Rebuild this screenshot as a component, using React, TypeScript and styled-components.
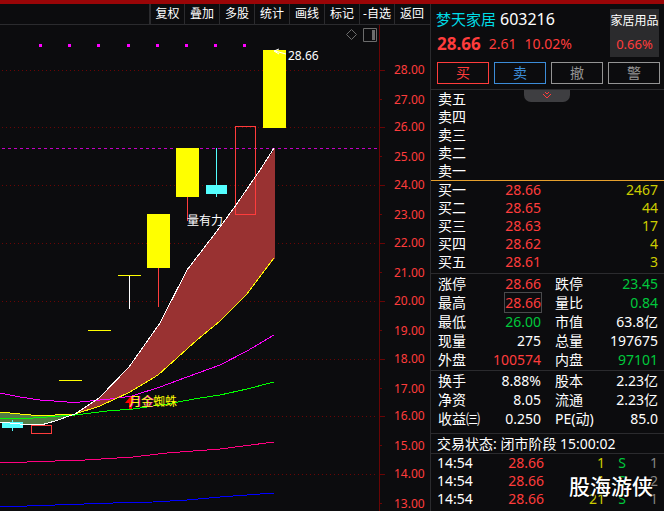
import React from 'react';
import styled, { createGlobalStyle } from 'styled-components';

const c = {
  bg: '#0c0c0e',
  line: '#2b2b2e',
  red: '#ff3c3c',
  green: '#00c83c',
  yellow: '#cccc00',
  white: '#ffffff',
  grey: '#858585',
  blue: '#3c8cd8',
};

const GlobalStyle = createGlobalStyle`
  * { box-sizing: border-box; }
  body {
    margin: 0;
    background: ${c.bg};
    color: ${c.white};
    font-family: "Noto Sans", "Noto Sans CJK SC", sans-serif;
    font-size: 14px;
  }
  button { font: inherit; padding: 0; cursor: pointer; }
`;

const Page = styled.div`
  min-height: 100vh;
  display: flex;
  flex-direction: column;
  border-top: 4px solid #990507;
`;

const Columns = styled.main`
  flex: 1;
  display: grid;
  grid-template-columns: minmax(0, 1fr) 234px;
`;

const ChartPane = styled.section`
  min-width: 0;
`;

const Toolbar = styled.nav`
  display: flex;
  justify-content: flex-end;
  height: 21px;
  padding-right: 1px;
  border-bottom: 1px solid ${c.line};
`;

const ToolButton = styled.button`
  width: 35px;
  border: 0;
  border-left: 1px solid ${c.line};
  background: none;
  color: ${c.white};
  font-size: 12px;
  line-height: 18px;
  white-space: nowrap;
  &:first-child { border-left-width: 2px; }
`;

const Chart = styled.svg`
  display: block;
  width: 100%;
  font-size: 12px;
`;

const QuotePanel = styled.aside`
  border-left: 1px solid ${c.line};
`;

const Header = styled.header`
  display: flex;
  justify-content: space-between;
  padding: 5px 5px 0;
`;

const TitleBlock = styled.div`
  flex: 1;
`;

const StockName = styled.h1`
  display: flex;
  gap: 4px;
  margin: 0;
  font-size: 15px;
  font-weight: 400;
  line-height: 20px;
  color: #00dce6;
`;

const Code = styled.span`
  color: ${c.white};
  font-size: 16px;
`;

const PriceLine = styled.div`
  display: flex;
  align-items: center;
  gap: 8px;
  margin-top: 4px;
  padding-left: 1px;
  line-height: 22px;
  color: ${c.red};
`;

const LastPrice = styled.strong`
  font-size: 17px;
`;

const Sector = styled.a`
  width: 49px;
  height: 48px;
  background: #2b2b2d;
  color: ${c.white};
  font-size: 12px;
  line-height: 23px;
  text-align: center;
  text-decoration: none;
  white-space: nowrap;
`;

const SectorChange = styled.span`
  display: block;
  font-size: 13px;
  line-height: 24px;
  color: ${c.red};
`;

const Actions = styled.div`
  display: grid;
  grid-template-columns: repeat(4, 1fr);
  gap: 5px;
  padding: 5px 4px 5px 6px;
`;

const ActionButton = styled.button<{ $tone: string }>`
  height: 22px;
  border: 1px solid ${(p) => p.$tone};
  background: none;
  color: ${(p) => p.$tone};
  line-height: 18px;
`;

const Block = styled.section<{ $line?: string; $bottom?: number }>`
  position: relative;
  border-top: 1px solid ${(p) => p.$line ?? c.line};
  padding: 0 5px ${(p) => p.$bottom ?? 0}px 7px;
`;

const StatusBlock = styled(Block)`
  padding-left: 6px;
`;

const FoldTab = styled.button`
  position: absolute;
  top: 0;
  left: 93px;
  width: 46px;
  height: 12px;
  border: 0;
  border-radius: 0 0 7px 7px;
  background: #3e3e41;
  svg { display: block; margin: 0 auto 2px; }
`;

const Table = styled.table`
  width: 100%;
  table-layout: fixed;
  border-collapse: collapse;
`;

const Row = styled.tr<{ $tall?: boolean }>`
  height: ${(p) => (p.$tall ? 19 : 18)}px;
`;

const Label = styled.th<{ $w: number; $indent?: number }>`
  width: ${(p) => p.$w}px;
  padding: 0 0 0 ${(p) => p.$indent ?? 0}px;
  font-weight: 400;
  text-align: left;
  line-height: 18px;
  white-space: nowrap;
`;

const Value = styled.td<{ $tone: string; $w?: number }>`
  width: ${(p) => (p.$w ? `${p.$w}px` : 'auto')};
  padding: 0 1px 0 0;
  color: ${(p) => p.$tone};
  text-align: right;
  line-height: 18px;
  white-space: nowrap;
`;

const Framed = styled.span`
  outline: 1px solid #4a4a4c;
`;

const Status = styled.p`
  margin: 0;
  line-height: 19px;
`;

const Watermark = styled.div`
  position: absolute;
  right: 11px;
  top: 17px;
  font-size: 21px;
  font-weight: 500;
  line-height: 30px;
  color: #fff;
  text-shadow: 1px 1px 1px #000;
`;

const tools = ['复权', '叠加', '多股', '统计', '画线', '标记', '-自选', '返回'];
const asks = ['卖五', '卖四', '卖三', '卖二', '卖一'];
const bids = [
  ['买一', '28.66', '2467'],
  ['买二', '28.65', '44'],
  ['买三', '28.63', '17'],
  ['买四', '28.62', '4'],
  ['买五', '28.61', '3'],
];

type Stat = [string, string, string, string, string, string];
const dayStats: Stat[] = [
  ['涨停', '28.66', c.red, '跌停', '23.45', c.green],
  ['最高', '28.66', c.red, '量比', '0.84', c.green],
  ['最低', '26.00', c.green, '市值', '63.8亿', c.white],
  ['现量', '275', c.white, '总量', '197675', c.white],
  ['外盘', '100574', c.red, '内盘', '97101', c.green],
];
const companyStats: Stat[] = [
  ['换手', '8.88%', c.white, '股本', '2.23亿', c.white],
  ['净资', '8.05', c.white, '流通', '2.23亿', c.white],
  ['收益㈢', '0.250', c.white, 'PE(动)', '85.0', c.white],
];
const trades = [
  ['14:54', '28.66', '1', 'S', '1'],
  ['14:54', '28.66', '1', 'S', '2'],
  ['14:54', '28.66', '21', 'S', '1'],
];

const axisTicks = [70, 99, 127, 156, 185, 214, 243, 272, 301, 330, 359, 388, 416, 445, 474, 503];
const signalDots = [39, 68, 97, 127, 156, 185, 214, 243];

const fastLine = '0,422 20,424 41,425 55,421 75,414 99,398 129,367 160,323 187,270 220,227 236,205 260,170 274,148';
const slowLine = '0,412 20,414 41,416 55,415 75,414 100,406 130,392 158,375 197,340 220,321 247,294 274,258';

function StatTable({ rows, framed }: { rows: Stat[]; framed?: string }) {
  return (
    <Table>
      <tbody>
        {rows.map(([l1, v1, t1, l2, v2, t2]) => (
          <Row key={l1} $tall>
            <Label scope="row" $w={50}>{l1}</Label>
            <Value $tone={t1} $w={54}>{l1 === framed ? <Framed>{v1}</Framed> : v1}</Value>
            <Label scope="row" $w={60} $indent={13}>{l2}</Label>
            <Value $tone={t2}>{v2}</Value>
          </Row>
        ))}
      </tbody>
    </Table>
  );
}

function CandleChart() {
  return (
    <Chart viewBox="0 25 430 486" role="img" aria-label="日K线图">
      <g shapeRendering="crispEdges" stroke="#6a0505">
        {axisTicks.map((y, i) => (
          <g key={y}>
            {i % 2 === 0 && <path d={`M2 ${y + 0.5}H378`} strokeDasharray="1 3" />}
            <path d={`M379 ${y + 0.5}h${i % 2 === 0 ? 6 : 3}`} />
          </g>
        ))}
        <path d="M379.5 25V511" />
      </g>
      <g fill={c.red}>
        {axisTicks.map((y, i) => (
          <text key={y} x="394" y={y + (i % 2 === 0 ? 4 : 5)}>{`${28 - i}.00`}</text>
        ))}
      </g>

      <g fill="none" stroke="#6c6c6c">
        <path d="M351.500 29.500l5 5-5 5-5-5z" />
        <path d="M363.500 28.500h13v13h-13z" />
        <path d="M372 30h3v10h-3z" fill="#6c6c6c" stroke="none" />
      </g>

      <g shapeRendering="crispEdges">
        <path d="M2 148.500H377" stroke="#c400c4" strokeDasharray="3 3" />
        {signalDots.map((x) => (
          <rect key={x} x={x} y="44" width="3" height="3" fill="#ff00ff" />
        ))}
        <polygon fill="#537d45" points="0,412 20,414 41,416 55,415 75,414 55,421 41,425 20,424 0,422" />
        <polygon
          fill="#993232"
          points="75,414 99,398 129,367 160,323 187,270 220,227 236,205 260,170 275,148 275,258 247,294 220,321 197,340 158,375 130,392 100,406"
        />
        <g fill="#54ffff">
          <rect x="2" y="422" width="21" height="6" />
          <rect x="12" y="420" width="1" height="11" />
          <rect x="206" y="185" width="21" height="9" />
          <rect x="216" y="148" width="1" height="49" />
        </g>
        <g fill="#ffff00">
          <rect x="59" y="380" width="23" height="1" />
          <rect x="88" y="330" width="23" height="1" />
          <rect x="118" y="275" width="23" height="1" />
          <rect x="147" y="214" width="23" height="54" />
          <rect x="176" y="148" width="23" height="49" />
          <rect x="263" y="50" width="23" height="78" />
        </g>
        <rect x="129" y="276" width="1" height="33" fill="#fff" />
        <rect x="158" y="268" width="1" height="39" fill={c.red} />
        <rect x="187" y="197" width="1" height="24" fill={c.red} />
        <g fill="none" stroke="#ff3c3c">
          <rect x="31.500" y="425.500" width="20" height="8" />
          <rect x="235.500" y="126.500" width="20" height="88" />
        </g>
      </g>

      <g fill="none" shapeRendering="crispEdges">
        <polyline stroke="#ff00ff" points="0,393 20,397 40,400 67,402 80,402 110,399 132,396 160,387 187,377 220,365 247,351 274,335" />
        <polyline stroke="#ffff00" points={slowLine} />
        <polyline stroke="#00ff00" points="0,418 33,418 75,415 107,411 133,409 167,404 200,398 220,395 247,389 274,382" />
        <polyline stroke="#ffffff" points={fastLine} />
        <polyline stroke="#ff0080" points="0,462 27,462 55,461 85,460 133,457 167,453 220,449 274,442" />
        <polyline stroke="#0000ff" points="0,506 27,506 55,505 113,503 153,502 187,500 220,497 274,493" />
      </g>

      <path d="M286 54l-11-3M279 49l-5 2 5 3" fill="none" stroke="#fff" />
      <text x="288" y="60" fill={c.white}>28.66</text>
      <text x="187" y="225" fill={c.white}>量有力</text>
      <path d="M130 397l-5 6h4v6h3v-12z" fill="#ff0000" />
      <text x="130" y="406" fill="#ff00ff">月金</text>
      <text x="129" y="406" fill="#ffff00">月金蜘蛛</text>
    </Chart>
  );
}

export default function App() {
  return (
    <>
      <GlobalStyle />
      <Page>
        <Columns>
          <ChartPane>
            <Toolbar>
              {tools.map((t) => <ToolButton key={t} type="button">{t}</ToolButton>)}
            </Toolbar>
            <CandleChart />
          </ChartPane>

          <QuotePanel>
            <Header>
              <TitleBlock>
                <StockName>梦天家居<Code>603216</Code></StockName>
                <PriceLine>
                  <LastPrice>28.66</LastPrice>
                  <span>2.61</span>
                  <span>10.02%</span>
                </PriceLine>
              </TitleBlock>
              <Sector href="#sector">
                家居用品
                <SectorChange>0.66%</SectorChange>
              </Sector>
            </Header>
            <Actions>
              <ActionButton type="button" $tone={c.red}>买</ActionButton>
              <ActionButton type="button" $tone={c.blue}>卖</ActionButton>
              <ActionButton type="button" $tone="#949494">撤</ActionButton>
              <ActionButton type="button" $tone="#949494">警</ActionButton>
            </Actions>

            <Block>
              <Table>
                <tbody>
                  {asks.map((a) => (
                    <Row key={a}><Label scope="row" $w={50}>{a}</Label></Row>
                  ))}
                </tbody>
              </Table>
              <FoldTab type="button" aria-label="展开">
                <svg width="10" height="8" viewBox="0 0 10 8" fill="none" stroke={c.red}>
                  <path d="M3 1l2 2 2-2M1 3l4 4 4-4" />
                </svg>
              </FoldTab>
            </Block>

            <Block $line="#e6a02d" $bottom={2}>
              <Table>
                <tbody>
                  {bids.map(([label, price, volume]) => (
                    <Row key={label}>
                      <Label scope="row" $w={50}>{label}</Label>
                      <Value $tone={c.red} $w={54}>{price}</Value>
                      <Value $tone={c.yellow}>{volume}</Value>
                    </Row>
                  ))}
                </tbody>
              </Table>
            </Block>

            <Block $bottom={1}>
              <StatTable rows={dayStats} framed="最高" />
            </Block>
            <Block $bottom={5}>
              <StatTable rows={companyStats} />
            </Block>
            <StatusBlock>
              <Status>交易状态: 闭市阶段 15:00:02</Status>
            </StatusBlock>

            <StatusBlock>
              <Table>
                <tbody>
                  {trades.map(([time, price, volume, side, count], i) => (
                    <Row key={i}>
                      <Label scope="row" $w={50}>{time}</Label>
                      <Value $tone={c.red} $w={58}>{price}</Value>
                      <Value $tone={c.yellow} $w={61}>{volume}</Value>
                      <Value $tone={c.green} $w={21}>{side}</Value>
                      <Value $tone={c.grey}>{count}</Value>
                    </Row>
                  ))}
                </tbody>
              </Table>
              <Watermark>股海游侠</Watermark>
            </StatusBlock>
          </QuotePanel>
        </Columns>
      </Page>
    </>
  );
}
